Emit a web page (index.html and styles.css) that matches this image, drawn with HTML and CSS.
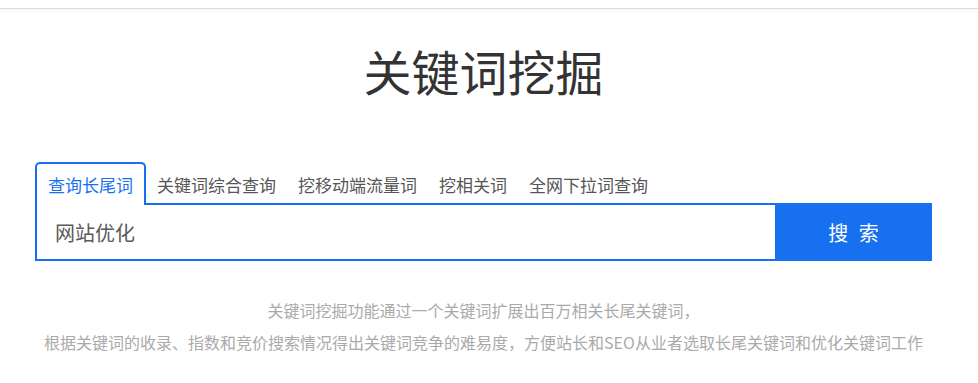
FILE: index.html
```html
<!DOCTYPE html>
<html lang="zh-CN">
<head>
<meta charset="utf-8">
<title>关键词挖掘</title>
<link rel="stylesheet" href="styles.css">
</head>
<body>
<header class="topbar"></header>
<main class="wrap">
  <h1 class="title">关键词挖掘</h1>
  <nav class="tabs">
    <a class="tab tab-active">查询长尾词</a>
    <a class="tab">关键词综合查询</a>
    <a class="tab">挖移动端流量词</a>
    <a class="tab">挖相关词</a>
    <a class="tab">全网下拉词查询</a>
  </nav>
  <form class="search">
    <input class="search-input" type="text" value="网站优化">
    <button class="search-btn" type="button">搜 索</button>
  </form>
  <p class="desc">关键词挖掘功能通过一个关键词扩展出百万相关长尾关键词，<br>根据关键词的收录、指数和竞价搜索情况得出关键词竞争的难易度，方便站长和SEO从业者选取长尾关键词和优化关键词工作</p>
</main>
</body>
</html>
```

FILE: styles.css
```css
* { box-sizing: border-box; }
html, body { margin: 0; padding: 0; background: #fff; }
body {
  font-family: "Noto Sans CJK SC", "Noto Sans", sans-serif;
  color: #333;
  overflow: hidden;
}
.topbar {
  height: 9px;
  border-bottom: 1px solid #dcdcdc;
  box-shadow: 0 2px 4px rgba(0, 0, 0, 0.04);
}
.wrap {
  width: 897px;
  margin-left: 35px;
}
.title {
  margin: 25px 0 0;
  font-size: 48px;
  line-height: 72px;
  font-weight: 400;
  color: #333;
  text-align: center;
}
.tabs {
  display: flex;
  margin-top: 56px;
  position: relative;
  z-index: 2;
}
.tab {
  display: block;
  height: 43px;
  margin-bottom: -2px;
  padding: 0 11px;
  font-size: 17px;
  line-height: 41px;
  color: #555;
  border-top: 2px solid transparent;
  background: transparent;
  white-space: nowrap;
  cursor: pointer;
}
.tab-active {
  color: #1770f0;
  background: #fff;
  border: 2px solid #1770f0;
  border-bottom: 0;
  border-radius: 5px 5px 0 0;
}
.search {
  display: flex;
  height: 58px;
  margin: 0;
  position: relative;
  z-index: 1;
}
.search-input {
  flex: 1;
  height: 58px;
  margin: 0;
  padding: 0 0 0 18px;
  border: 2px solid #1770f0;
  border-right: 0;
  outline: none;
  font-family: "Noto Sans CJK SC", "Noto Sans", sans-serif;
  font-size: 20px;
  color: #5a5a5a;
  background: #fff;
}
.search-btn {
  width: 157px;
  height: 58px;
  margin: 0;
  padding: 0 0 0 3px;
  border: 0;
  background: #1770f0;
  color: #fff;
  font-family: "Noto Sans CJK SC", "Noto Sans", sans-serif;
  font-size: 20px;
  letter-spacing: 3px;
  cursor: pointer;
}
.desc {
  margin: 33px 0 0;
  font-size: 16px;
  line-height: 32px;
  color: #aaa;
  text-align: center;
}
```
